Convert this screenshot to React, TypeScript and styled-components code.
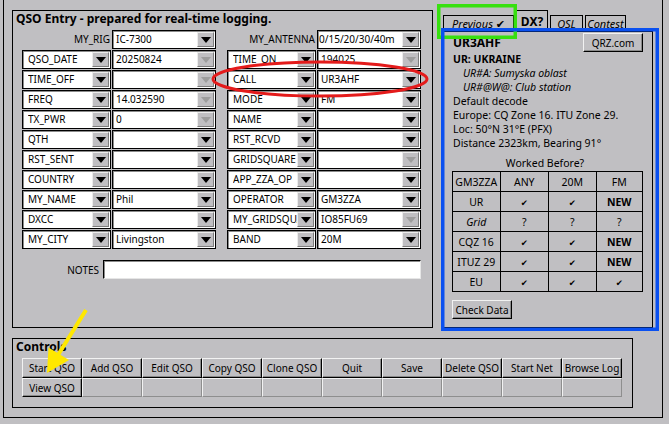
import React from 'react';
import styled, { createGlobalStyle } from 'styled-components';

const BG = '#c0bfc2';

const Global = createGlobalStyle`
  html, body { margin: 0; padding: 0; background: ${BG}; }
  body { font-family: "Noto Sans", "DejaVu Sans", sans-serif; font-size: 10px; color: #000; }
`;

const Page = styled.div`
  position: relative;
  width: 669px;
  height: 424px;
  overflow: hidden;
  background: ${BG};
`;

const Window = styled.div`
  margin-left: 3px;
  width: 660px;
  height: 418px;
  box-sizing: border-box;
  border: 1px solid #000;
  border-top: none;
  padding: 10px 0 0 8px;
  display: flex;
  flex-direction: column;
  gap: 10px;
`;

const TopRow = styled.div`
  display: flex;
  gap: 10px;
  height: 318px;
`;

const Frame = styled.div<{ $w: number; $h: number }>`
  box-sizing: border-box;
  width: ${p => p.$w}px;
  height: ${p => p.$h}px;
  border: 1px solid #000;
  padding: 0 0 0 3px;
  display: flex;
  flex-direction: column;
`;

const FrameTitle = styled.div`
  font-weight: bold;
  font-size: 12px;
  line-height: 16px;
  white-space: nowrap;
`;

const FormGrid = styled.div`
  margin: 3px 0 0 6px;
  display: grid;
  grid-template-columns: 89px 104px 9px 89px 104px;
  grid-auto-rows: 19px;
  column-gap: 1px;
  row-gap: 1px;
`;

const Label = styled.div<{ $right?: boolean }>`
  grid-column-start: ${p => (p.$right ? 4 : 'auto')};
  text-align: right;
  padding-right: 1px;
  font-size: 10px;
  line-height: 19px;
  white-space: nowrap;
`;

const Combo = styled.div<{ $pad: number; $right?: boolean }>`
  grid-column-start: ${p => (p.$right ? 4 : 'auto')};
  display: flex;
  align-items: center;
  box-sizing: border-box;
  height: 19px;
  min-width: 0;
  background: #fff;
  border: 1px solid #000;
  box-shadow: inset 1px 1px 0 #8c8c8c;
  padding: 1px 1px 1px ${p => p.$pad}px;
`;

const ComboText = styled.span`
  flex: 1;
  min-width: 0;
  overflow: hidden;
  white-space: nowrap;
  font-size: 10px;
  line-height: 15px;
`;

const ArrowBtn = styled.span<{ $off?: boolean }>`
  flex: none;
  width: 17px;
  height: 15px;
  box-sizing: border-box;
  display: flex;
  align-items: center;
  justify-content: center;
  background: ${BG};
  border: 1px solid;
  border-color: #ececec #7d7d7d #7d7d7d #ececec;
  &::after {
    content: '';
    border-left: 5.5px solid transparent;
    border-right: 5.5px solid transparent;
    border-top: 6px solid ${p => (p.$off ? '#9d9d9d' : '#000')};
  }
`;

const NotesRow = styled.div`
  margin: 11px 0 0 6px;
  display: flex;
  align-items: center;
  gap: 4px;
`;

const NotesLabel = styled.span`
  width: 77px;
  text-align: right;
  font-size: 10px;
`;

const Entry = styled.div`
  box-sizing: border-box;
  width: 318px;
  height: 19px;
  background: #fff;
  border: 1px solid #000;
  border-color: #000 #e6e6e6 #e6e6e6 #000;
  box-shadow: inset 1px 1px 0 #8c8c8c;
`;

/* Notebook */
const Notebook = styled.div`
  width: 210px;
  display: flex;
  flex-direction: column;
`;

const TabStrip = styled.div`
  height: 21px;
  display: flex;
  align-items: flex-end;
  gap: 2px;
`;

const Tab = styled.div<{ $w: number; $sel?: boolean; $italic?: boolean }>`
  box-sizing: border-box;
  width: ${p => p.$w}px;
  height: ${p => (p.$sel ? 21 : 16)}px;
  border: 1px solid #000;
  border-bottom: none;
  background: ${BG};
  display: flex;
  align-items: center;
  justify-content: center;
  white-space: nowrap;
  font-size: ${p => (p.$sel ? 12 : 11)}px;
  font-weight: ${p => (p.$sel ? 'bold' : 'normal')};
  font-style: ${p => (p.$italic ? 'italic' : 'normal')};
  padding-top: ${p => (p.$sel ? 1 : 0)}px;
`;

const NbBody = styled.div`
  flex: 1;
  box-sizing: border-box;
  border: 1px solid #000;
  padding: 1px 9px 0 9px;
  display: flex;
  flex-direction: column;
`;

const HeadRow = styled.div`
  display: flex;
  justify-content: space-between;
  align-items: center;
  height: 19px;
`;

const Call = styled.span`
  font-weight: bold;
  font-size: 12px;
`;

const Btn = styled.div<{ $w: number; $off?: boolean }>`
  box-sizing: border-box;
  width: ${p => p.$w}px;
  height: 100%;
  display: flex;
  align-items: center;
  justify-content: center;
  background: ${BG};
  border: 1px solid;
  border-color: ${p => (p.$off ? '#f2f2f2 #8e8e8e #8e8e8e #f2f2f2' : '#f2f2f2 #000 #000 #f2f2f2')};
  box-shadow: ${p => (p.$off ? 'none' : 'inset -1px -1px 0 #8a8a8a')};
  font-size: 10px;
  white-space: nowrap;
  overflow: hidden;
`;

const SideBtn = styled(Btn)`
  height: 19px;
  margin-left: -1px;
`;

const InfoLine = styled.div<{ $indent?: boolean; $italic?: boolean; $bold?: boolean }>`
  font-size: 10.5px;
  line-height: 14px;
  white-space: nowrap;
  padding-left: ${p => (p.$indent ? 10 : 0)}px;
  font-style: ${p => (p.$italic ? 'italic' : 'normal')};
  font-weight: ${p => (p.$bold ? 'bold' : 'normal')};
`;

const WBTitle = styled.div`
  margin-top: 6px;
  text-align: center;
  font-size: 10.5px;
  line-height: 14px;
  padding-right: 6px;
`;

const Table = styled.table`
  margin: 1px 0 0 -1px;
  border-collapse: collapse;
  font-size: 10.5px;
  td {
    border: 1px solid #000;
    text-align: center;
    padding: 0;
    height: 19px;
    white-space: nowrap;
  }
`;

const Cell = styled.td<{ $w?: number; $bold?: boolean; $italic?: boolean }>`
  width: ${p => (p.$w ? `${p.$w - 1}px` : 'auto')};
  font-weight: ${p => (p.$bold ? 'bold' : 'normal')};
  font-style: ${p => (p.$italic ? 'italic' : 'normal')};
`;

const Tick = styled.span`
  font-family: "DejaVu Sans", sans-serif;
  font-size: 8.5px;
`;

const CheckRow = styled.div`
  margin-top: 8px;
  display: flex;
`;

/* Controls */
const ButtonGrid = styled.div`
  margin: 3px 0 0 6px;
  display: grid;
  grid-template-columns: repeat(10, 60px);
  grid-template-rows: 20px 19px;
`;

const Overlay = styled.svg`
  position: absolute;
  left: 0;
  top: 0;
  pointer-events: none;
`;

type R = { ln: string; lv: string; ld?: boolean; rn: string; rv: string; rd?: boolean };

const rows: R[] = [
  { ln: 'QSO_DATE', lv: '20250824', ld: true, rn: 'TIME_ON', rv: '194025', rd: true },
  { ln: 'TIME_OFF', lv: '', ld: true, rn: 'CALL', rv: 'UR3AHF' },
  { ln: 'FREQ', lv: '14.032590', ld: true, rn: 'MODE', rv: 'FM' },
  { ln: 'TX_PWR', lv: '0', ld: true, rn: 'NAME', rv: '' },
  { ln: 'QTH', lv: '', rn: 'RST_RCVD', rv: '' },
  { ln: 'RST_SENT', lv: '', rn: 'GRIDSQUARE', rv: '', rd: true },
  { ln: 'COUNTRY', lv: '', rn: 'APP_ZZA_OP', rv: '' },
  { ln: 'MY_NAME', lv: 'Phil', rn: 'OPERATOR', rv: 'GM3ZZA' },
  { ln: 'DXCC', lv: '', rn: 'MY_GRIDSQUARE', rv: 'IO85FU69', rd: true },
  { ln: 'MY_CITY', lv: 'Livingston', rn: 'BAND', rv: '20M' },
];

const ComboBox = ({ text, pad, off, right }: { text: string; pad: number; off?: boolean; right?: boolean }) => (
  <Combo $pad={pad} $right={right}>
    <ComboText>{text}</ComboText>
    <ArrowBtn $off={off} />
  </Combo>
);

const TICK = <Tick>✔</Tick>;

const table: { k: React.ReactNode; italic?: boolean; c: React.ReactNode[]; newCol?: boolean }[] = [
  { k: 'UR', c: [TICK, TICK, 'NEW'], newCol: true },
  { k: 'Grid', italic: true, c: ['?', '?', '?'] },
  { k: 'CQZ 16', c: [TICK, TICK, 'NEW'], newCol: true },
  { k: 'ITUZ 29', c: [TICK, TICK, 'NEW'], newCol: true },
  { k: 'EU', c: [TICK, TICK, TICK] },
];

const buttons = ['Start QSO', 'Add QSO', 'Edit QSO', 'Copy QSO', 'Clone QSO', 'Quit', 'Save', 'Delete QSO', 'Start Net', 'Browse Log'];

export default function App() {
  return (
    <Page>
      <Global />
      <Window>
        <TopRow>
          <Frame $w={421} $h={318}>
            <FrameTitle>QSO Entry - prepared for real-time logging.</FrameTitle>
            <FormGrid>
              <Label>MY_RIG</Label>
              <ComboBox text="IC-7300" pad={3} />
              <Label $right>MY_ANTENNA</Label>
              <ComboBox text="0/15/20/30/40m" pad={1} />
              {rows.map(r => (
                <React.Fragment key={r.ln}>
                  <ComboBox text={r.ln} pad={5} />
                  <ComboBox text={r.lv} pad={3} off={r.ld} />
                  <ComboBox text={r.rn} pad={5} right />
                  <ComboBox text={r.rv} pad={3} off={r.rd} />
                </React.Fragment>
              ))}
            </FormGrid>
            <NotesRow>
              <NotesLabel>NOTES</NotesLabel>
              <Entry />
            </NotesRow>
          </Frame>
          <Notebook>
            <TabStrip>
              <Tab $w={71} $italic>Previous ✔</Tab>
              <Tab $w={32} $sel>DX?</Tab>
              <Tab $w={33} $italic>QSL</Tab>
              <Tab $w={41} $italic>Contest</Tab>
            </TabStrip>
            <NbBody>
              <HeadRow>
                <Call>UR3AHF</Call>
                <SideBtn $w={60}>QRZ.com</SideBtn>
              </HeadRow>
              <InfoLine $bold>UR: UKRAINE</InfoLine>
              <InfoLine $indent $italic>UR#A: Sumyska oblast</InfoLine>
              <InfoLine $indent $italic>UR#@W@: Club station</InfoLine>
              <InfoLine>Default decode</InfoLine>
              <InfoLine>Europe: CQ Zone 16. ITU Zone 29.</InfoLine>
              <InfoLine>Loc: 50°N 31°E (PFX)</InfoLine>
              <InfoLine>Distance 2323km, Bearing 91°</InfoLine>
              <WBTitle>Worked Before?</WBTitle>
              <Table>
                <tbody>
                  <tr>
                    <Cell $w={47}>GM3ZZA</Cell>
                    <Cell $w={48}>ANY</Cell>
                    <Cell $w={47}>20M</Cell>
                    <Cell $w={46}>FM</Cell>
                  </tr>
                  {table.map((t, i) => (
                    <tr key={i}>
                      <Cell $italic={t.italic}>{t.k}</Cell>
                      <Cell>{t.c[0]}</Cell>
                      <Cell>{t.c[1]}</Cell>
                      <Cell $bold={t.newCol}>{t.c[2]}</Cell>
                    </tr>
                  ))}
                </tbody>
              </Table>
              <CheckRow>
                <SideBtn $w={60}>Check Data</SideBtn>
              </CheckRow>
            </NbBody>
          </Notebook>
        </TopRow>
        <Frame $w={621} $h={70}>
          <FrameTitle>Controls</FrameTitle>
          <ButtonGrid>
            {buttons.map(b => (
              <Btn key={b} $w={60}>{b}</Btn>
            ))}
            <Btn $w={60}>View QSO</Btn>
            {Array.from({ length: 9 }).map((_, i) => (
              <Btn key={i} $w={60} $off />
            ))}
          </ButtonGrid>
        </Frame>
      </Window>
      <Overlay width={669} height={424} viewBox="0 0 669 424">
        <ellipse cx={320} cy={79} rx={107} ry={17} fill="none" stroke="#e41b1b" strokeWidth={3} />
        <rect x={438.75} y={5.75} width={76.5} height={31.5} fill="none" stroke="#38e010" strokeWidth={3.5} />
        <rect x={442.75} y={29.75} width={214.5} height={299.5} fill="none" stroke="#0a50f0" strokeWidth={3.5} />
        <line x1={86} y1={310} x2={58} y2={355} stroke="#ffe800" strokeWidth={4} />
        <polygon points="47,373 48.5,347.5 69,360" fill="#ffe800" />
      </Overlay>
    </Page>
  );
}
